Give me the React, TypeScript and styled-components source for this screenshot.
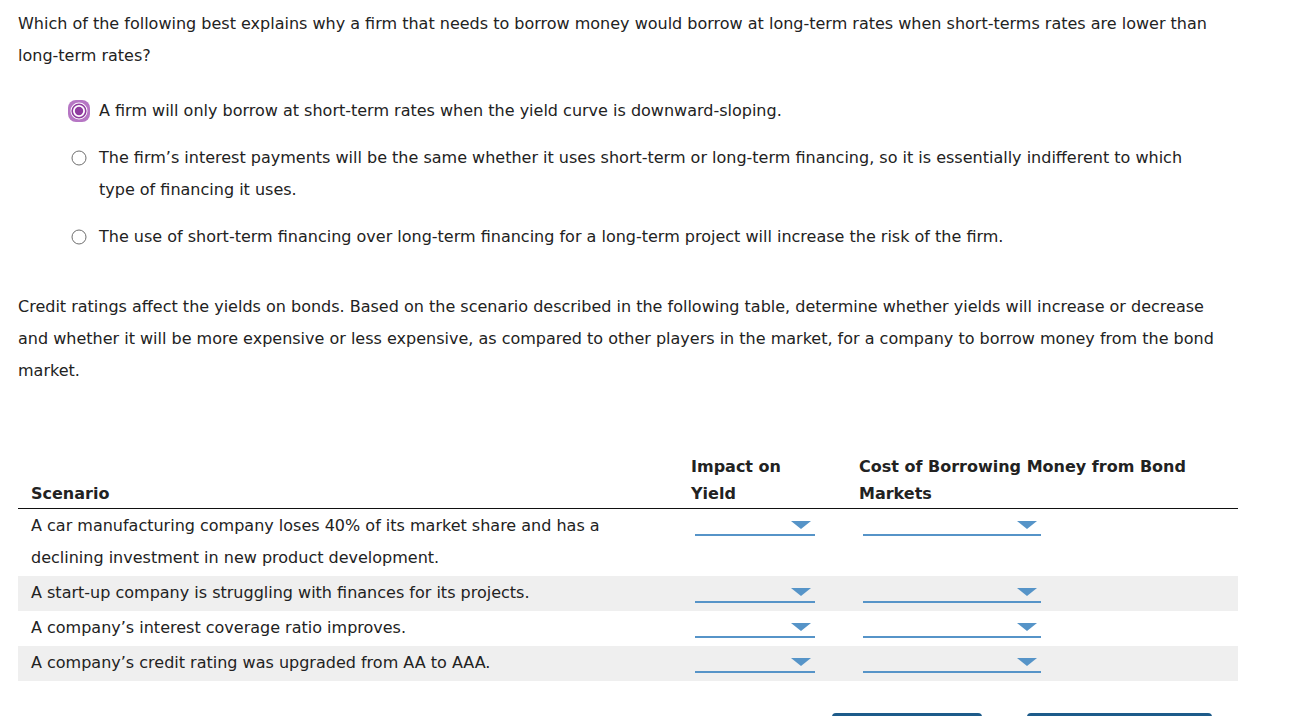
import React from "react";
import styled, {createGlobalStyle} from "styled-components";

const GlobalStyle = createGlobalStyle`
    body {
        margin: 0;
        background: #fff;
        font-family: "DejaVu Sans", Verdana, sans-serif;
        font-size: 16px;
        color: #222;
    }
`

const Page = styled.div`
    width: 1220px;
    padding: 8px 18px 0;
`

const Question = styled.p`
    margin: 0;
    line-height: 32px;
`

const OptionList = styled.div`
    display: flex;
    flex-direction: column;
    gap: 15px;
    margin: 23px 20px 0 49px;
`

const Option = styled.label`
    display: flex;
    align-items: flex-start;
    gap: 8px;
    line-height: 32px;
    cursor: pointer;
`

const RadioSlot = styled.span`
    flex: 0 0 24px;
    height: 32px;
    display: flex;
    align-items: center;
    justify-content: center;
`

const Intro = styled.p`
    margin: 38px 0 0;
    line-height: 32px;
`

const Table = styled.div`
    margin-top: 66px;
    width: 1220px;
`

const Row = styled.div<{ shaded?: boolean, head?: boolean }>`
    display: grid;
    grid-template-columns: 660px 168px 1fr;
    background: ${props => props.shaded ? "#efefef" : "transparent"};
    border-bottom: ${props => props.head ? "1px solid #111" : "none"};
`

const HeadCell = styled.div<{ narrow?: number }>`
    align-self: end;
    padding: 0 13px 1px;
    font-weight: bold;
    line-height: 27px;
    max-width: ${props => props.narrow ? props.narrow + "px" : "none"};
`

const Cell = styled.div`
    padding: 1px 13px 2px;
    line-height: 32px;
`

const Select = styled.div<{ w: number }>`
    position: relative;
    width: ${props => props.w}px;
    height: 24px;
    margin-left: 4px;
    border-bottom: 2px solid #5694c8;
    cursor: pointer;

    &::after {
        content: "";
        position: absolute;
        right: 4px;
        top: 11px;
        border-left: 10px solid transparent;
        border-right: 10px solid transparent;
        border-top: 8px solid #5694c8;
    }
`

const Buttons = styled.div`
    display: flex;
    justify-content: flex-end;
    gap: 45px;
    margin: 32px 26px 0 0;
`

// only the top edge of these shows in the frame
const Button = styled.button<{ w: number }>`
    width: ${props => props.w}px;
    height: 40px;
    border: none;
    border-radius: 4px;
    background: #1d5b8a;
    cursor: pointer;
`

const SelectedRadio = () => (
    <svg width="24" height="24" viewBox="0 0 24 24">
        <rect x="1" y="1" width="22" height="22" rx="8" fill="#b676c4"/>
        <circle cx="12" cy="12" r="8.5" fill="#fff"/>
        <circle cx="12" cy="12" r="6.8" fill="#fff" stroke="#8f3c9f" strokeWidth="1.6"/>
        <circle cx="12" cy="12" r="4.2" fill="#8f3c9f"/>
    </svg>
)

const EmptyRadio = () => (
    <svg width="16" height="16" viewBox="0 0 16 16">
        <circle cx="8" cy="8" r="7" fill="#fff" stroke="#6f6f6f" strokeWidth="1"/>
    </svg>
)

const options = [
    "A firm will only borrow at short-term rates when the yield curve is downward-sloping.",
    "The firm\u2019s interest payments will be the same whether it uses short-term or long-term financing, so it is essentially indifferent to which type of financing it uses.",
    "The use of short-term financing over long-term financing for a long-term project will increase the risk of the firm.",
]

const scenarios = [
    "A car manufacturing company loses 40% of its market share and has a declining investment in new product development.",
    "A start-up company is struggling with finances for its projects.",
    "A company\u2019s interest coverage ratio improves.",
    "A company\u2019s credit rating was upgraded from AA to AAA.",
]

const App = () => {
    const selected = 0;

    return (
        <Page>
            <GlobalStyle/>
            <Question>
                Which of the following best explains why a firm that needs to borrow money would borrow at long-term
                rates when short-terms rates are lower than long-term rates?
            </Question>
            <OptionList>
                {options.map((text, i) => (
                    <Option key={i}>
                        <RadioSlot>{i === selected ? <SelectedRadio/> : <EmptyRadio/>}</RadioSlot>
                        <span>{text}</span>
                    </Option>
                ))}
            </OptionList>
            <Intro>
                Credit ratings affect the yields on bonds. Based on the scenario described in the following table,
                determine whether yields will increase or decrease and whether it will be more expensive or less
                expensive, as compared to other players in the market, for a company to borrow money from the bond
                market.
            </Intro>
            <Table>
                <Row head>
                    <HeadCell>Scenario</HeadCell>
                    <HeadCell narrow={110}>Impact on Yield</HeadCell>
                    <HeadCell>Cost of Borrowing Money from Bond Markets</HeadCell>
                </Row>
                {scenarios.map((text, i) => (
                    <Row key={i} shaded={i % 2 === 1}>
                        <Cell>{text}</Cell>
                        <Cell><Select w={120}/></Cell>
                        <Cell><Select w={178}/></Cell>
                    </Row>
                ))}
            </Table>
            <Buttons>
                <Button w={150} aria-label="Grade It Now"/>
                <Button w={185} aria-label="Save and Continue"/>
            </Buttons>
        </Page>
    )
}

export default App;
